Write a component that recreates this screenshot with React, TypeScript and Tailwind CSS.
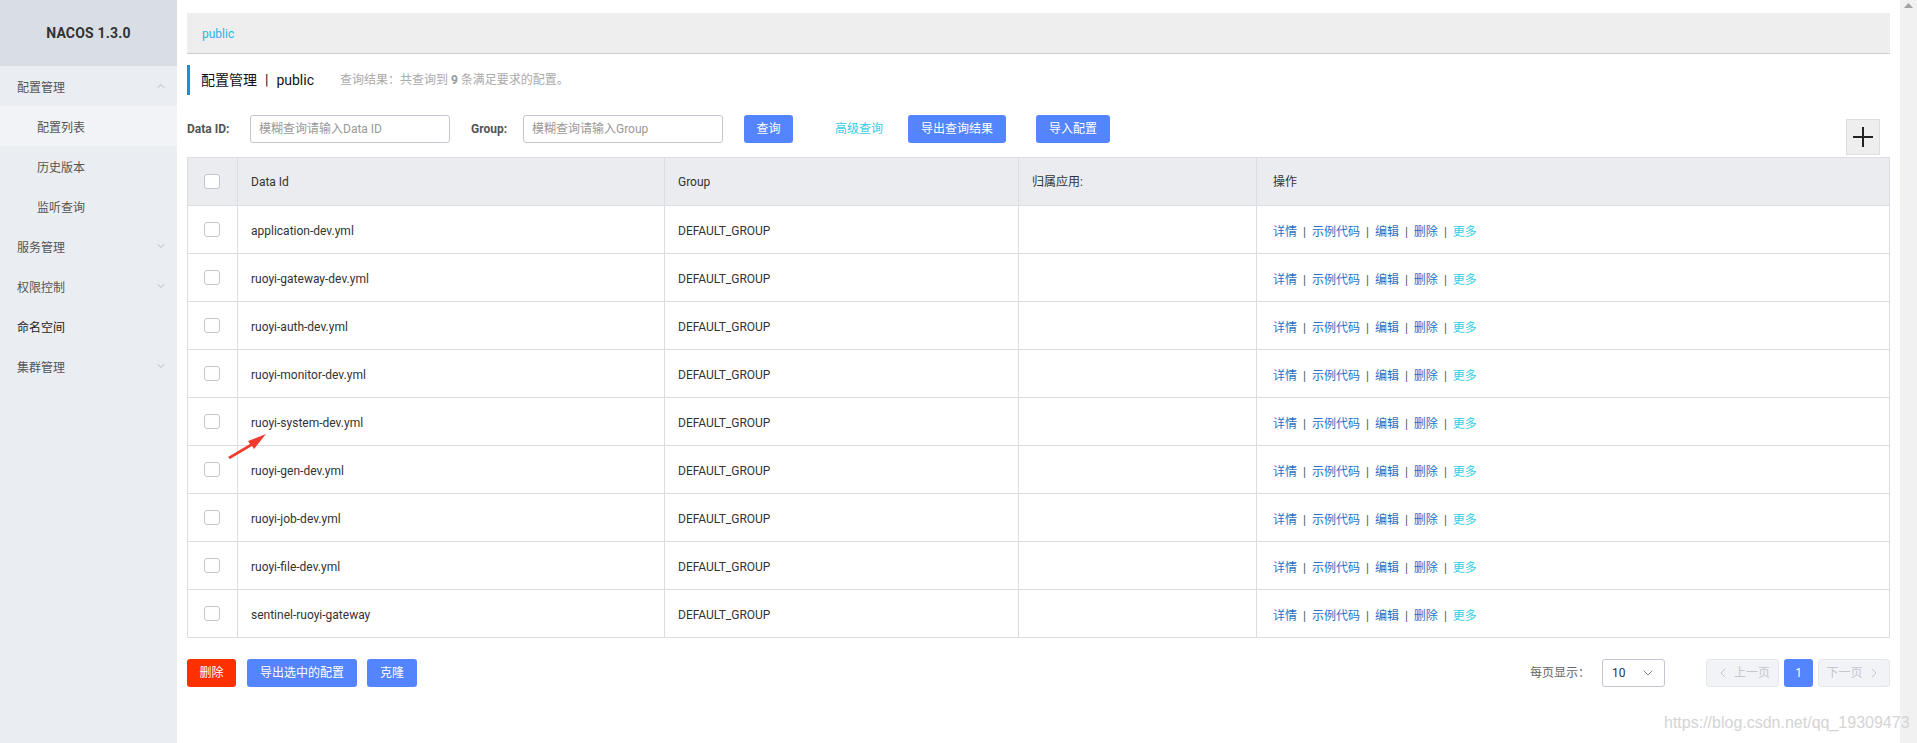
import { ChevronDown, ChevronUp, ChevronLeft, ChevronRight } from 'lucide-react'

const ROWS = [
  'application-dev.yml',
  'ruoyi-gateway-dev.yml',
  'ruoyi-auth-dev.yml',
  'ruoyi-monitor-dev.yml',
  'ruoyi-system-dev.yml',
  'ruoyi-gen-dev.yml',
  'ruoyi-job-dev.yml',
  'ruoyi-file-dev.yml',
  'sentinel-ruoyi-gateway',
]

const FONT = "font-['Roboto','Noto_Sans_CJK_SC',sans-serif]"

function Checkbox() {
  return <span className="block w-4 h-[15px] rounded-[3px] border border-[#c4c6cf] bg-white" />
}

function MenuItem({ label, sub, active, arrow }: { label: string; sub?: boolean; active?: boolean; arrow?: 'up' | 'down' }) {
  return (
    <div className={`h-10 flex items-center pr-[10px] ${sub ? 'pl-[37px]' : 'pl-[17px]'} ${active ? 'bg-[#f2f3f7]' : ''}`}>
      <span className={`flex-1 text-[12px] pt-[3px] ${label === '命名空间' ? 'text-[#222]' : 'text-[#555]'}`}>{label}</span>
      {arrow === 'up' && <ChevronUp className="w-3 h-3 text-[#aaa]" strokeWidth={1.5} />}
      {arrow === 'down' && <ChevronDown className="w-3 h-3 text-[#aaa]" strokeWidth={1.5} />}
    </div>
  )
}

function Sep() {
  return <span className="text-[#555] mx-[6px]">|</span>
}

export default function App() {
  return (
    <div className={`relative flex h-[743px] w-[1917px] overflow-hidden bg-white ${FONT}`}>
      {/* sidebar */}
      <aside className="w-[177px] shrink-0 bg-[#eaedf1]">
        <div className="h-[66px] bg-[#d9dde4] flex items-center justify-center">
          <span className="text-[14px] font-bold text-[#333] tracking-[0.2px]">NACOS 1.3.0</span>
        </div>
        <MenuItem label="配置管理" arrow="up" />
        <MenuItem label="配置列表" sub active />
        <MenuItem label="历史版本" sub />
        <MenuItem label="监听查询" sub />
        <MenuItem label="服务管理" arrow="down" />
        <MenuItem label="权限控制" arrow="down" />
        <MenuItem label="命名空间" />
        <MenuItem label="集群管理" arrow="down" />
      </aside>

      {/* main */}
      <main className="flex-1 min-w-0 pl-[10px] pr-[10px] pt-[13px]">
        <div className="h-[41px] bg-[#eeeeee] border-b border-[#cccccc] flex items-center pl-[15px]">
          <span className="text-[12px] text-[#2bb3e3] pt-[2px]">public</span>
        </div>

        <div className="mt-[11px] h-[30px] border-l-[3px] border-[#1d8fd7] flex items-center pl-[11px]">
          <span className="text-[14px] text-[#111]">配置管理</span>
          <span className="text-[14px] text-[#111] mx-[8px]">|</span>
          <span className="text-[14px] text-[#111]">public</span>
          <span className="ml-[26px] text-[12px] text-[#aaa]">
            查询结果：共查询到 <b className="text-[#999]">9</b> 条满足要求的配置。
          </span>
        </div>

        <div className="mt-[20px] h-[42px] flex items-start">
          <div className="h-7 flex items-center">
            <span className="text-[12px] font-bold text-[#555] w-[63px]">Data ID:</span>
            <input
              placeholder="模糊查询请输入Data ID"
              className="w-[200px] h-7 border border-[#c4c6cf] rounded-[3px] px-[8px] text-[12px] placeholder:text-[#999] outline-none"
            />
            <span className="text-[12px] font-bold text-[#555] ml-[21px] w-[52px]">Group:</span>
            <input
              placeholder="模糊查询请输入Group"
              className="w-[200px] h-7 border border-[#c4c6cf] rounded-[3px] px-[8px] text-[12px] placeholder:text-[#999] outline-none"
            />
            <button className="ml-[21px] w-[49px] h-7 rounded-[3px] bg-[#5584ff] text-white text-[12px]">查询</button>
            <span className="ml-[42px] text-[12px] text-[#33cde5]">高级查询</span>
            <button className="ml-[25px] w-[98px] h-7 rounded-[3px] bg-[#5584ff] text-white text-[12px]">导出查询结果</button>
            <button className="ml-[30px] w-[74px] h-7 rounded-[3px] bg-[#5584ff] text-white text-[12px]">导入配置</button>
          </div>
          <div className="flex-1" />
          <button className="mt-[4px] mr-[10px] w-[34px] h-[36px] bg-[#eeeeee] border border-[#dddddd] flex items-center justify-center">
            <svg width="20" height="20" viewBox="0 0 20 20">
              <path d="M10 0v20M0 10h20" stroke="#222" strokeWidth="2" />
            </svg>
          </button>
        </div>

        {/* table */}
        <table className="w-full border-collapse border border-[#dcdee3] text-[12px] text-[#333] table-fixed">
          <colgroup>
            <col className="w-[50px]" />
            <col className="w-[427px]" />
            <col className="w-[354px]" />
            <col className="w-[238px]" />
            <col />
          </colgroup>
          <thead>
            <tr className="h-[48px] bg-[#ebecf0]">
              <th className="border-r border-b border-[#dcdee3] pl-[16px] font-normal text-left"><Checkbox /></th>
              <th className="border-r border-b border-[#dcdee3] pl-[13px] font-normal text-left">Data Id</th>
              <th className="border-r border-b border-[#dcdee3] pl-[13px] font-normal text-left">Group</th>
              <th className="border-r border-b border-[#dcdee3] pl-[13px] font-normal text-left">归属应用:</th>
              <th className="border-b border-[#dcdee3] pl-[16px] font-normal text-left">操作</th>
            </tr>
          </thead>
          <tbody>
            {ROWS.map(r => (
              <tr key={r} className="h-[48px]">
                <td className="border-r border-b border-[#dcdee3] pl-[16px]"><Checkbox /></td>
                <td className="border-r border-b border-[#dcdee3] pl-[13px] pt-[2px]">{r}</td>
                <td className="border-r border-b border-[#dcdee3] pl-[13px] pt-[2px]">DEFAULT_GROUP</td>
                <td className="border-r border-b border-[#dcdee3]" />
                <td className="border-b border-[#dcdee3] pl-[16px] pt-[4px] text-[#1f6fc6]">
                  <span>详情</span><Sep />
                  <span>示例代码</span><Sep />
                  <span>编辑</span><Sep />
                  <span>删除</span><Sep />
                  <span className="text-[#33cde5]">更多</span>
                </td>
              </tr>
            ))}
          </tbody>
        </table>

        {/* footer */}
        <div className="mt-[21px] flex items-center">
          <button className="w-[49px] h-7 rounded-[3px] bg-[#ff3000] text-white text-[12px]">删除</button>
          <button className="ml-[11px] w-[110px] h-7 rounded-[3px] bg-[#5584ff] text-white text-[12px]">导出选中的配置</button>
          <button className="ml-[10px] w-[50px] h-7 rounded-[3px] bg-[#5584ff] text-white text-[12px]">克隆</button>
          <div className="flex-1" />
          <span className="text-[12px] text-[#666] mr-[12px]">每页显示：</span>
          <div className="w-[63px] h-7 border border-[#c4c6cf] rounded-[3px] flex items-center pl-[9px] pr-[8px]">
            <span className="flex-1 text-[12px] text-[#333]">10</span>
            <ChevronDown className="w-4 h-4 text-[#888]" strokeWidth={1.5} />
          </div>
          <button className="ml-[41px] w-[73px] h-7 rounded-[3px] bg-[#f2f3f7] border border-[#e6e7eb] text-[#c4c6cf] text-[12px] flex items-center justify-center gap-[3px]">
            <ChevronLeft className="w-4 h-4" strokeWidth={1.5} />上一页
          </button>
          <button className="ml-[5px] w-[29px] h-7 rounded-[3px] bg-[#5584ff] text-white text-[12px]">1</button>
          <button className="ml-[5px] w-[72px] h-7 rounded-[3px] bg-[#f2f3f7] border border-[#e6e7eb] text-[#c4c6cf] text-[12px] flex items-center justify-center gap-[3px]">
            下一页<ChevronRight className="w-4 h-4" strokeWidth={1.5} />
          </button>
        </div>
      </main>

      {/* scrollbar strip */}
      <div className="w-[17px] shrink-0 bg-[#f1f1f1] flex justify-center pt-[3px]">
        <svg width="9" height="6" viewBox="0 0 9 6"><path d="M4.5 0L9 5H0z" fill="#a3a3a3" /></svg>
      </div>

      {/* annotation arrow */}
      <svg className="absolute left-[226px] top-[430px]" width="44" height="30" viewBox="0 0 44 30">
        <path d="M2 27 L24 14 L22 11 L40 4 L28 19 L26 16 L4 29 Z" fill="#f03a2e" />
      </svg>

      {/* watermark */}
      <span className="absolute left-[1664px] top-[711px] text-[16px] text-[#d4d4d4] font-['Liberation_Sans',sans-serif] whitespace-nowrap">
        https://blog.csdn.net/qq_19309473
      </span>
    </div>
  )
}
